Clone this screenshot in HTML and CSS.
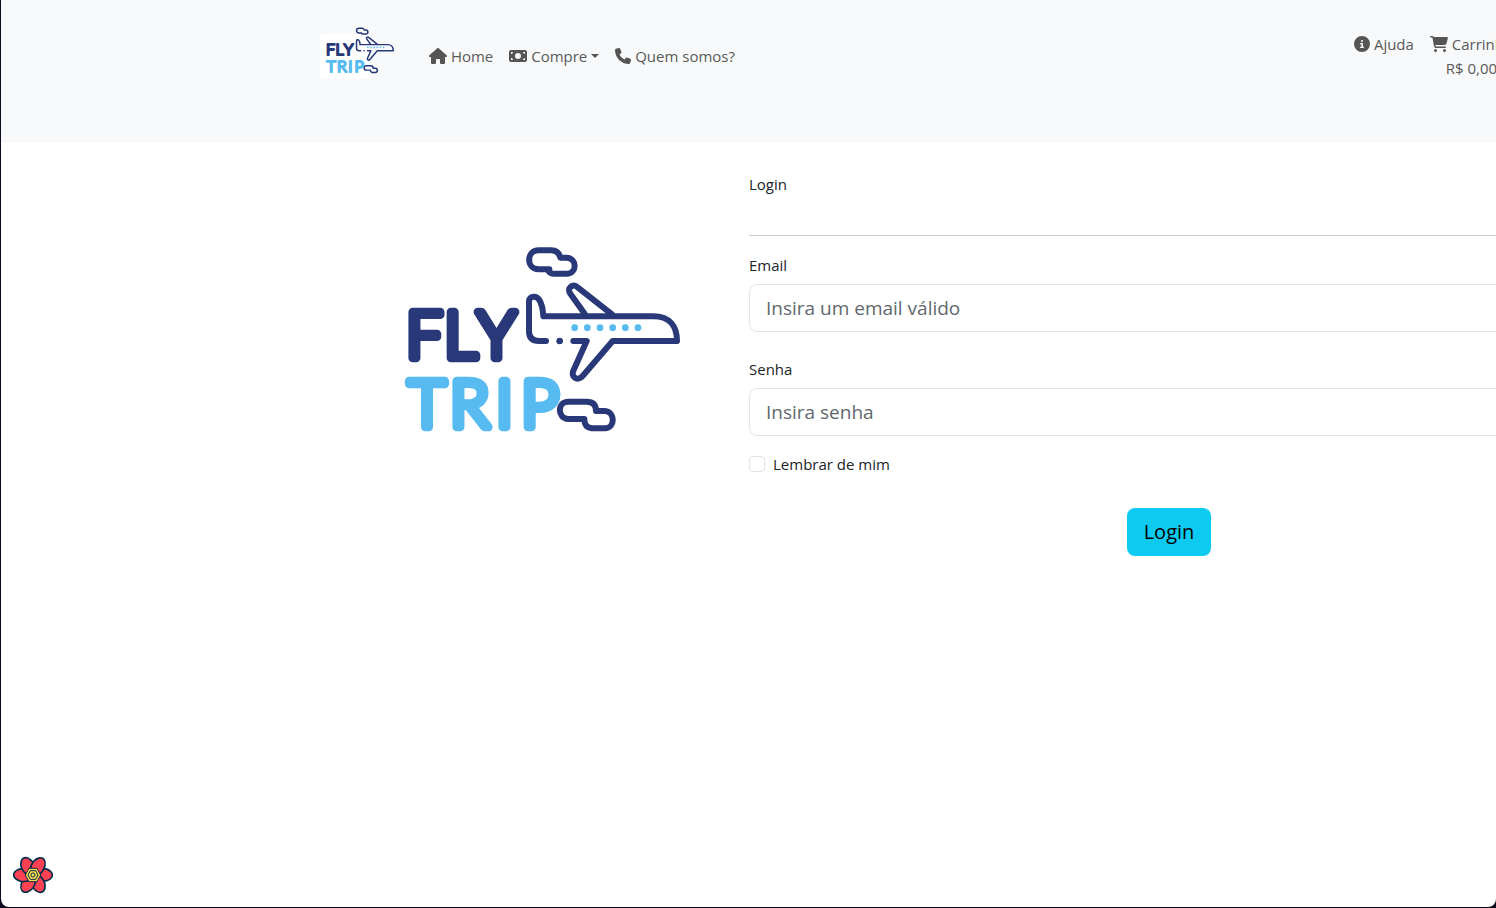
FILE: index.html
```html
<!DOCTYPE html>
<html lang="pt-BR">
<head>
<meta charset="utf-8">
<title>Fly Trip</title>
<link rel="stylesheet" href="styles.css">
</head>
<body>
<svg class="defs" aria-hidden="true">
  <symbol id="logo" viewBox="0 0 930 660">
    <g class="logo-lines">
      <path d="M478 118H446C408 118 408 61 446 61H484Q506 61 511 83H530C562 85 562 131 530 131H490Q478 131 472 118"/>
      <path d="M468 333H447Q417 333 417 303V215C417 196 440 196 448 210Q458 225 460 259H790C840 259 861 290 861 333H668L578 438C562 456 541 440 550 422L590 333H550"/>
      <path d="M584 251L540 190C530 175 548 158 563 172L666 253"/>
      <path d="M583 567H535C501 565 501 515 535 515H590Q618 515 618 543H645C676 545 676 595 645 595H605Q583 592 583 567Z"/>
    </g>
    <circle class="logo-navy" cx="509" cy="333" r="10"/>
    <g class="logo-sky"><circle cx="554" cy="293" r="10"/><circle cx="592" cy="293" r="10"/><circle cx="630" cy="293" r="10"/><circle cx="668" cy="293" r="10"/><circle cx="706" cy="293" r="10"/><circle cx="744" cy="293" r="10"/></g>
    <text class="logo-word logo-navy" x="48 163 262" y="385">FLY</text>
    <text class="logo-word logo-sky" x="55 180 318 394" y="590">TRIP</text>
  </symbol>
</svg>
<div class="page">
  <header class="header">
    <div class="container topbar">
      <div class="nav-main">
        <a class="brand" href="#" aria-label="Fly Trip"><svg><use href="#logo"/></svg></a>
        <nav class="links">
          <a href="#"><svg class="icon wide" viewBox="0 0 576 512"><path d="M575.8 255.5c0 18-15 32.1-32 32.1h-32l.7 160.2c0 2.7-.2 5.4-.5 8.1V472c0 22.1-17.9 40-40 40H456c-1.1 0-2.2 0-3.3-.1c-1.4 .1-2.8 .1-4.2 .1H416 392c-22.1 0-40-17.9-40-40V448 384c0-17.700-14.300-32-32-32H256c-17.700 0-32 14.300-32 32v64 24c0 22.100-17.900 40-40 40H160 128.100c-1.500 0-3-.100-4.500-.200c-1.200 .100-2.400 .200-3.600 .200H104c-22.100 0-40-17.900-40-40V360c0-.900 0-1.900 .100-2.800V287.600H32c-18 0-32-14-32-32.100c0-9 3-17 10-24L266.400 8c7-7 15-8 22-8s15 2 21 7L564.800 231.500c8 7 12 15 11 24z"/></svg> Home</a>
          <a href="#"><svg class="icon wide" viewBox="0 0 576 512"><path d="M64 64C28.700 64 0 92.700 0 128V384c0 35.300 28.700 64 64 64H512c35.300 0 64-28.700 64-64V128c0-35.300-28.700-64-64-64H64zm64 320H64V320c35.300 0 64 28.700 64 64zM64 192V128h64c0 35.300-28.700 64-64 64zM448 384c0-35.300 28.700-64 64-64v64H448zm64-192c-35.300 0-64-28.700-64-64h64v64zM288 160a96 96 0 1 1 0 192 96 96 0 1 1 0-192z"/></svg> Compre<span class="caret"></span></a>
          <a href="#"><svg class="icon" viewBox="0 0 512 512"><path d="M164.900 24.600c-7.700-18.600-28-28.500-47.400-23.200l-88 24C12.100 30.200 0 46 0 64C0 311.400 200.600 512 448 512c18 0 33.800-12.100 38.600-29.500l24-88c5.300-19.400-4.600-39.700-23.200-47.400l-96-40c-16.300-6.800-35.200-2.100-46.300 11.600L304.700 368C234.300 334.700 177.300 277.700 144 207.300L193.300 167c13.700-11.200 18.400-30 11.600-46.300l-40-96z"/></svg> Quem somos?</a>
        </nav>
      </div>
      <nav class="links links-end">
        <a href="#"><svg class="icon" viewBox="0 0 512 512"><path d="M256 512A256 256 0 1 0 256 0a256 256 0 1 0 0 512zM216 336h24V272H216c-13.300 0-24-10.700-24-24s10.700-24 24-24h48c13.300 0 24 10.700 24 24v88h8c13.300 0 24 10.700 24 24s-10.700 24-24 24H216c-13.300 0-24-10.700-24-24s10.700-24 24-24zm40-208a32 32 0 1 1 0 64 32 32 0 1 1 0-64z"/></svg> Ajuda</a>
        <a class="cart" href="#"><span><svg class="icon wide" viewBox="0 0 576 512"><path d="M0 24C0 10.700 10.700 0 24 0H69.500c22 0 41.500 12.800 50.600 32h411c26.300 0 45.500 25 38.600 50.400l-41 152.300c-8.500 31.400-37 53.300-69.500 53.300H170.700l5.400 28.500c2.200 11.300 12.100 19.500 23.600 19.500H488c13.300 0 24 10.700 24 24s-10.700 24-24 24H199.700c-34.600 0-64.300-24.600-70.700-58.500L77.400 54.500c-.7-3.800-4-6.500-7.900-6.500H24C10.700 48 0 37.300 0 24zM128 464a48 48 0 1 1 96 0 48 48 0 1 1 -96 0zm336-48a48 48 0 1 1 0 96 48 48 0 1 1 0-96z"/></svg> Carrinho</span><span>R$ 0,00</span></a>
      </nav>
    </div>
  </header>
  <main class="container content">
    <svg class="hero" role="img" aria-label="Fly Trip"><use href="#logo"/></svg>
    <form class="login">
      <p class="title">Login</p>
      <hr>
      <label for="email">Email</label>
      <input class="field" id="email" type="email" placeholder="Insira um email válido">
      <label for="senha">Senha</label>
      <input class="field" id="senha" type="password" placeholder="Insira senha">
      <div class="remember"><input type="checkbox" id="lembrar"><label for="lembrar">Lembrar de mim</label></div>
      <button type="button">Login</button>
    </form>
  </main>
  <button class="devtools" type="button" aria-label="Query devtools">
    <svg viewBox="0 0 120 120">
      <defs><path id="petal" d="M60 60C62 44 80 39 96 41C110 44 118 53 118 60C118 69 108 77 92 79C80 80 66 76 60 60Z"/></defs>
      <g class="petals">
        <use href="#petal"/><use href="#petal" transform="rotate(60 60 60)"/><use href="#petal" transform="rotate(120 60 60)"/><use href="#petal" transform="rotate(180 60 60)"/><use href="#petal" transform="rotate(240 60 60)"/><use href="#petal" transform="rotate(300 60 60)"/>
      </g>
      <path class="core" d="M48 40H72L83 60L72 80H48L37 60Z"/>
      <path class="ring" d="M52 47H68L75 60L68 73H52L45 60Z"/>
      <circle class="ring" cx="60" cy="60" r="6"/>
    </svg>
  </button>
</div>
</body>
</html>
```
FILE: styles.css
```css
* { box-sizing: border-box; }
body {
  margin: 0;
  background: #0b0b1c;
  color: #212529;
  font: 15px/24px "Open Sans", "Noto Sans", sans-serif;
}
.defs { position: absolute; width: 0; height: 0; }
.page {
  position: relative;
  min-height: calc(100vh - 1px);
  margin: 0 0 1px 1px;
  overflow: hidden;
  background: #fff;
  border-radius: 0 0 8px 8px;
}
.container { width: 1280px; margin-left: 319px; }
.header { padding: 32px 0 63px; background: #f8f9fa; }
.topbar { display: grid; grid-template-columns: 1034px 1fr; align-items: center; }
.nav-main { display: flex; align-items: center; gap: 59px; }
.brand {
  position: relative;
  width: 50px;
  height: 45px;
  border-radius: 4px;
  background: #fff;
}
.brand svg { position: absolute; left: 2px; top: -11px; width: 77px; height: 55px; }
.links { display: flex; align-items: flex-start; gap: 16px; white-space: nowrap; }
.links a { color: #595959; text-decoration: none; }
.icon { width: 16px; height: 16px; vertical-align: -2px; fill: #555; }
.icon.wide { width: 18px; }
.caret {
  display: inline-block;
  margin-left: 4px;
  vertical-align: 4px;
  border: 4px solid transparent;
  border-top-color: #555;
  border-bottom: 0;
}
.cart { display: flex; flex-direction: column; align-items: center; }
.content { display: flex; align-items: flex-start; padding-top: 29px; }
.hero { flex: none; width: 310px; height: 220px; margin: 58px 49px 0 70px; }
.login { flex: none; width: 840px; display: flex; flex-direction: column; }
.title { margin: 0; }
hr { width: 100%; margin: 39px 0 17px; border: 0; border-top: 1px solid #c8c9ca; }
.field {
  height: 48px;
  margin: 7px 0 25px;
  padding: 8px 16px;
  border: 1px solid #dee2e6;
  border-radius: 8px;
  background: #fff;
  font: inherit;
  font-size: 19px;
}
#senha { margin-bottom: 16px; }
.field::placeholder { color: #62686d; opacity: 1; }
.remember { display: flex; align-items: center; gap: 8px; }
.remember input {
  appearance: none;
  width: 16px;
  height: 16px;
  margin: 0;
  border: 1px solid #dee2e6;
  border-radius: 4px;
}
.login button {
  align-self: center;
  height: 48px;
  margin-top: 32px;
  padding: 0 17px;
  border: 0;
  border-radius: 8px;
  background: #0dcaf0;
  color: #000;
  font: inherit;
  font-size: 20px;
}
.devtools {
  position: absolute;
  left: 12px;
  bottom: 12px;
  width: 40px;
  height: 40px;
  padding: 0;
  border: 0;
  background: none;
}
.devtools svg { display: block; width: 40px; height: 40px; }
.petals { fill: #ff4154; stroke: #002c4b; stroke-width: 5; }
.core { fill: #ffd94c; stroke: #002c4b; stroke-width: 3; }
.ring { fill: none; stroke: #002c4b; stroke-width: 3; }
.logo-lines { fill: none; stroke: #283878; stroke-width: 18; stroke-linecap: round; stroke-linejoin: round; }
.logo-navy { fill: #283878; stroke: #283878; stroke-width: 0; }
.logo-sky { fill: #57bbf2; stroke: #57bbf2; stroke-width: 0; }
.logo-word { font: 300 194px Lato, sans-serif; stroke-width: 26; stroke-linejoin: round; }
```
